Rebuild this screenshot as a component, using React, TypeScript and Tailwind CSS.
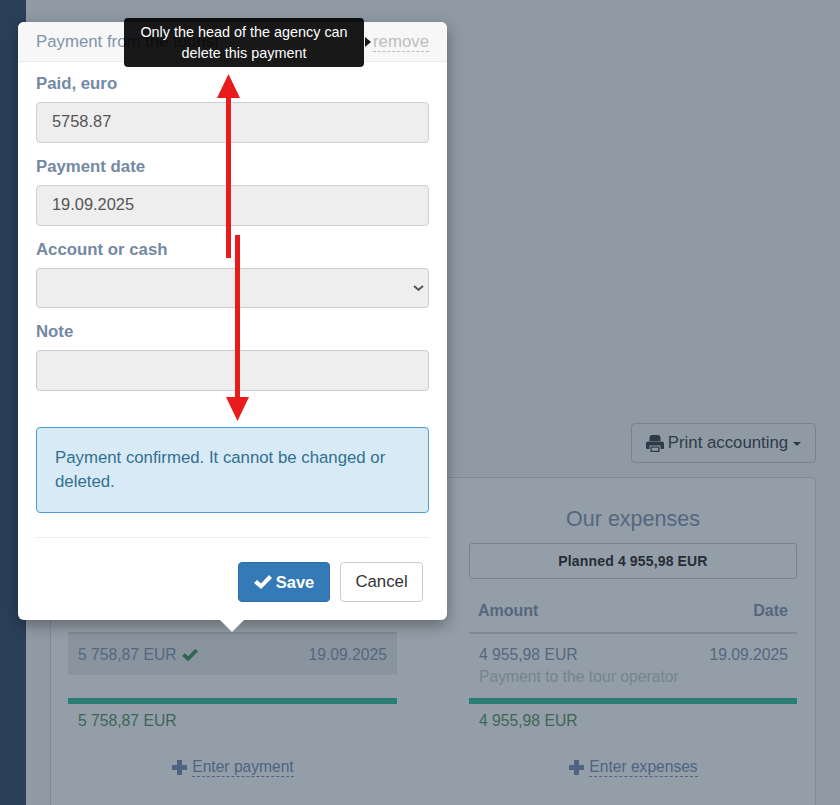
function CheckIcon({ className }: { className: string }) {
  return (
    <svg className={className} viewBox="0 0 18 14" fill="currentColor">
      <path d="M0 8L3 5L7 8.5L15 0L18 3L7 14Z" />
    </svg>
  )
}

function PlusIcon() {
  return (
    <svg className="h-[15px] w-[15px]" viewBox="0 0 15 15" fill="currentColor">
      <path d="M5 0h5v5h5v5h-5v5H5v-5H0V5h5z" />
    </svg>
  )
}

function PrintIcon() {
  return (
    <svg className="h-[17px] w-[18px]" viewBox="0 0 18 17" fill="currentColor">
      <path
        fillRule="evenodd"
        d="M5 0h8l1.500 2v4H3.500V2zM2 6.500h14q2 0 2 2V13q0 1-1 1h-2.500v-3.500h-11V14H1q-1 0-1-1V8.500q0-2 2-2zM4.500 11.500h9V17h-9zM5.800 12.800v2.900h6.400v-2.900z"
      />
    </svg>
  )
}

function Column({
  title,
  planned,
  amount,
  date,
  note,
  addLabel,
  confirmed,
  className,
}: {
  title: string
  planned: string
  amount: string
  date: string
  note?: string
  addLabel: string
  confirmed?: boolean
  className: string
}) {
  return (
    <div className={className}>
      <h3 className="h-[25px] text-center text-[21.5px] leading-[27px] text-[#55677f]">{title}</h3>
      <div className="mt-[12px] flex h-[36px] items-center justify-center rounded-[3px] border border-[#78838f] pb-[1px] text-sm font-bold tracking-[0.15px] text-[#262d36]">
        {planned}
      </div>
      <div className="flex h-[55px] items-center justify-between border-b-2 border-[#7f8a96] px-[9px] pt-[10px] text-base font-bold text-[#55677f]">
        <span>Amount</span>
        <span>Date</span>
      </div>
      <div className="h-[64px] text-[15.7px] leading-[22px] text-[#55677f]">
        <div className={`pt-[10px] pl-[10px] ${confirmed ? 'h-[41px] bg-[#89949f] pr-[10px]' : 'pr-[9px]'}`}>
          <div className="flex justify-between">
            <span className="flex items-center gap-[5px]">
              {amount}
              {confirmed && <CheckIcon className="h-[14px] w-[16px] text-[#2f6650]" />}
            </span>
            <span>{date}</span>
          </div>
          {note && <div className="text-[#77838f]">{note}</div>}
        </div>
      </div>
      <div className="h-[6px] bg-[#2a7e74]" />
      <div className="h-[32px] px-[10px] pt-[6px] text-[15.7px] leading-[22px] text-[#3e6655]">{amount}</div>
      <div className="mt-[21px] flex items-center justify-center gap-[5px] pl-[1px] text-[15.6px] leading-[22px] text-[#4f6480]">
        <PlusIcon />
        <span className="border-b border-dashed border-[#4f6480] leading-[19px]">{addLabel}</span>
      </div>
    </div>
  )
}

function Field({ label, value, children }: { label: string; value?: string; children?: React.ReactNode }) {
  return (
    <div>
      <label className="mb-[7px] block text-[16.8px] leading-[22px] font-bold text-[#7389a3]">{label}</label>
      {children ?? (
        <div className="h-[41px] rounded-[4px] border border-[#ccd1d6] bg-[#eeeeee] px-[15px] text-[16.4px] leading-[36px] text-[#555555]">
          {value}
        </div>
      )}
    </div>
  )
}

function PaymentPopover() {
  return (
    <div className="absolute top-[22px] left-[18px] z-10 w-[429px] rounded-[6px] bg-white shadow-[0_5px_15px_rgba(0,0,0,0.35)]">
      <div className="flex h-[40px] items-center justify-between rounded-t-[6px] border-b border-[#ebebeb] bg-[#f7f7f7] px-[18px] pt-[1px] text-[16.8px] text-[#7f93aa]">
        <span>Payment from the tourist</span>
        <span className="border-b border-dashed border-[#bbbbbb] leading-[19px] text-[#bdbdbd]">remove</span>
      </div>
      <div className="px-[18px] pt-[11px] pb-[18px]">
        <div className="flex flex-col gap-[13px]">
          <Field label="Paid, euro" value="5758.87" />
          <Field label="Payment date" value="19.09.2025" />
          <Field label="Account or cash">
            <div className="relative">
              <select
                disabled
                className="block h-[40px] w-full appearance-none rounded-[4px] border border-[#cccccc] bg-[#eeeeee] opacity-100"
              />
              <svg className="absolute top-[17px] right-[5px] h-[6px] w-[11px]" viewBox="0 0 11 6" fill="none" stroke="#555555" strokeWidth="2">
                <path d="M1 1l4.500 3.800L10 1" />
              </svg>
            </div>
          </Field>
          <Field label="Note">
            <div className="h-[41px] rounded-[4px] border border-[#cccccc] bg-[#eeeeee]" />
          </Field>
        </div>
        <div className="mt-[36px] h-[86px] rounded-[4px] border border-[#4b9fdc] bg-[#d9eaf7] px-[18px] pt-[18px] text-[16.8px] leading-[24px] text-[#31708f]">
          Payment confirmed. It cannot be changed or deleted.
        </div>
        <div className="mt-[24px] border-t border-[#eeeeee]" />
        <div className="mt-[24px] flex justify-end gap-[10px] pr-[6px]">
          <button className="flex h-[40px] w-[92px] items-center justify-center gap-[4px] rounded-[4px] border border-[#2e6da4] bg-[#337ab7] text-[16.5px] font-bold text-white">
            <CheckIcon className="h-[14px] w-[18px]" />
            Save
          </button>
          <button className="h-[40px] w-[83px] rounded-[4px] border border-[#cccccc] bg-white text-[16.8px] text-[#333333]">
            Cancel
          </button>
        </div>
      </div>
    </div>
  )
}

export default function App() {
  return (
    <div className="relative flex h-[805px] w-[840px] overflow-hidden bg-[#8f9aa5] font-['Liberation_Sans',Arial,sans-serif]">
      <aside className="w-[26px] shrink-0 bg-[#2a4058]" />
      <main className="flex-1 pt-[423px] pr-[24px] pl-[24px]">
        <div className="flex justify-end">
          <button className="flex h-[40px] w-[185px] items-center justify-center gap-[4px] rounded-[4px] border border-[#78838f] text-[16.8px] text-[#2f3a48]">
            <PrintIcon />
            Print accounting
            <span className="mt-[2px] ml-[1px] border-x-[4px] border-t-[4px] border-x-transparent border-t-[#2f3a48]" />
          </button>
        </div>
        <div className="mt-[14px] flex h-[400px] gap-[72px] rounded-[4px] border border-[#808b97] bg-[#939ea8] pt-[28px] pl-[17px]">
          <Column
            className="w-[329px]"
            title="Payments"
            planned="Planned 5 758,87 EUR"
            amount="5 758,87 EUR"
            date="19.09.2025"
            addLabel="Enter payment"
            confirmed
          />
          <Column
            className="w-[328px]"
            title="Our expenses"
            planned="Planned 4 955,98 EUR"
            amount="4 955,98 EUR"
            date="19.09.2025"
            note="Payment to the tour operator"
            addLabel="Enter expenses"
          />
        </div>
      </main>

      <PaymentPopover />

      {/* popover caret */}
      <div className="absolute top-[620px] left-[220px] z-10 border-x-[12px] border-t-[12px] border-x-transparent border-t-white" />

      {/* tooltip over the remove link */}
      <div className="absolute top-[18px] left-[124px] z-20 h-[49px] w-[240px] rounded-[4px] bg-black px-[6px] pt-[4px] text-center text-[14.4px] leading-[21px] text-white opacity-90">
        Only the head of the agency can delete this payment
        <span className="absolute top-[19px] right-[-7px] border-y-[5px] border-l-[6px] border-y-transparent border-l-black" />
      </div>

      {/* annotation arrows */}
      <svg className="absolute top-0 left-0 z-30" width="840" height="805" viewBox="0 0 840 805">
        <path d="M226 258V98H217L228.500 74L240 98H231V258Z" fill="#e81c1c" />
        <path d="M235 235V397H226L237.500 421L249 397H240V235Z" fill="#e81c1c" />
      </svg>
    </div>
  )
}
